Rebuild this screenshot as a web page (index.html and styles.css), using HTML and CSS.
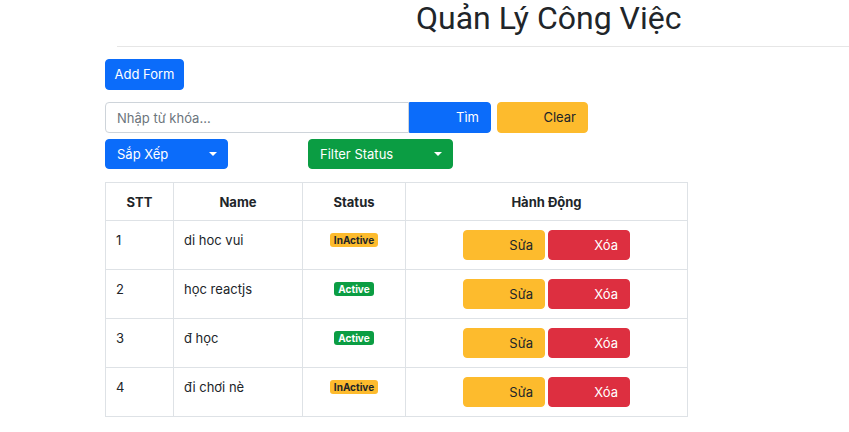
FILE: index.html
```html
<!DOCTYPE html>
<html lang="vi">
<head>
<meta charset="utf-8">
<title>Quản Lý Công Việc</title>
<link rel="stylesheet" href="styles.css">
</head>
<body>
<div class="page">
  <header class="head">
    <h1 class="title">Quản Lý Công Việc</h1>
  </header>
  <main class="content">
    <div class="row-add">
      <button class="btn btn-primary w-add">Add Form</button>
    </div>
    <div class="row-search">
      <input class="search" type="text" placeholder="Nhập từ khóa...">
      <button class="btn btn-primary btn-end w-find">Tìm</button>
      <button class="btn btn-warning btn-end w-clear">Clear</button>
    </div>
    <div class="row-filter">
      <button class="btn btn-primary dd w-sort">Sắp Xếp <span class="caret"></span></button>
      <button class="btn btn-success dd w-status">Filter Status <span class="caret"></span></button>
    </div>
    <table class="tbl">
      <colgroup>
        <col class="c1"><col class="c2"><col class="c3"><col class="c4">
      </colgroup>
      <thead>
        <tr><th>STT</th><th>Name</th><th>Status</th><th>Hành Động</th></tr>
      </thead>
      <tbody>
        <tr>
          <td>1</td><td>di hoc vui</td>
          <td class="center"><span class="badge badge-warn">InActive</span></td>
          <td class="center"><div class="actions"><button class="btn btn-warning btn-end w-act">Sửa</button><button class="btn btn-danger btn-end w-act">Xóa</button></div></td>
        </tr>
        <tr>
          <td>2</td><td>học reactjs</td>
          <td class="center"><span class="badge badge-ok">Active</span></td>
          <td class="center"><div class="actions"><button class="btn btn-warning btn-end w-act">Sửa</button><button class="btn btn-danger btn-end w-act">Xóa</button></div></td>
        </tr>
        <tr>
          <td>3</td><td>đ học</td>
          <td class="center"><span class="badge badge-ok">Active</span></td>
          <td class="center"><div class="actions"><button class="btn btn-warning btn-end w-act">Sửa</button><button class="btn btn-danger btn-end w-act">Xóa</button></div></td>
        </tr>
        <tr>
          <td>4</td><td>đi chơi nè</td>
          <td class="center"><span class="badge badge-warn">InActive</span></td>
          <td class="center"><div class="actions"><button class="btn btn-warning btn-end w-act">Sửa</button><button class="btn btn-danger btn-end w-act">Xóa</button></div></td>
        </tr>
      </tbody>
    </table>
  </main>
</div>
</body>
</html>
```
FILE: styles.css
```css
* { box-sizing: border-box; }
html, body { margin: 0; padding: 0; background: #fff; }
body {
  font-family: Inter, "Noto Sans", sans-serif;
  font-size: 13px;
  color: #212529;
}
.head {
  margin-left: 117px;
  height: 47px;
  border-bottom: 1px solid #e6e6e6;
}
.title {
  margin: 0;
  padding-left: 299px;
  font-family: Roboto, sans-serif;
  font-weight: 400;
  font-size: 32px;
  line-height: 36px;
  color: #212529;
}
.content {
  padding-left: 105px;
  padding-top: 12px;
}
.btn {
  font-family: inherit;
  font-size: 13px;
  line-height: 1;
  height: 31px;
  padding: 0 11px;
  border: 1px solid transparent;
  border-radius: 4px;
  display: inline-flex;
  align-items: center;
  cursor: pointer;
}
.btn-primary { background: #0b6cfa; border-color: #0b6cfa; color: #fff; }
.btn-warning { background: #fdbb2d; border-color: #fdbb2d; color: #212529; }
.btn-danger { background: #dd2f40; border-color: #dd2f40; color: #fff; }
.btn-success { background: #0b9d43; border-color: #0b9d43; color: #fff; }
.btn-end { justify-content: flex-end; }
.w-add { width: 79px; justify-content: center; padding: 0; }

.row-add { display: flex; }
.row-search {
  display: flex;
  margin-top: 12px;
}
.search {
  width: 304px;
  height: 31px;
  border: 1px solid #ced4da;
  border-radius: 4px 0 0 4px;
  padding: 0 11px;
  font-family: inherit;
  font-size: 13px;
  color: #212529;
}
.search::placeholder { color: #6c757d; }
.w-find { width: 82px; border-radius: 0 4px 4px 0; }
.w-clear { width: 91px; margin-left: 6px; }

.row-filter {
  display: flex;
  margin-top: 6px;
  gap: 80px;
}
.dd { justify-content: space-between; height: 30px; padding-right: 10px; }
.w-sort { width: 123px; }
.w-status { width: 145px; }
.caret {
  width: 0; height: 0;
  border-left: 4.5px solid transparent;
  border-right: 4.5px solid transparent;
  border-top: 4.5px solid #fff;
}

.tbl {
  margin-top: 13px;
  border-collapse: collapse;
  width: 582px;
  table-layout: fixed;
}
.c1 { width: 68px; }
.c2 { width: 129px; }
.c3 { width: 103px; }
.c4 { width: 282px; }
.tbl th, .tbl td {
  border: 1px solid #dee2e6;
  line-height: 21px;
}
.tbl th {
  font-weight: 700;
  text-align: center;
  padding: 8px 10px 7px;
  height: 38px;
}
.tbl td {
  vertical-align: top;
  text-align: left;
  padding: 9px 10px 8px;
  height: 49px;
}
.tbl td.center { text-align: center; }
.actions {
  display: flex;
  justify-content: center;
  gap: 3px;
}
.w-act { width: 82px; height: 30px; }
.badge {
  display: inline-block;
  font-size: 10px;
  font-weight: 700;
  line-height: 14px;
  padding: 0 4px;
  border-radius: 3px;
  vertical-align: 1px;
}
.badge-warn { background: #fdbb2d; color: #212529; }
.badge-ok { background: #0b9d43; color: #fff; }
```
